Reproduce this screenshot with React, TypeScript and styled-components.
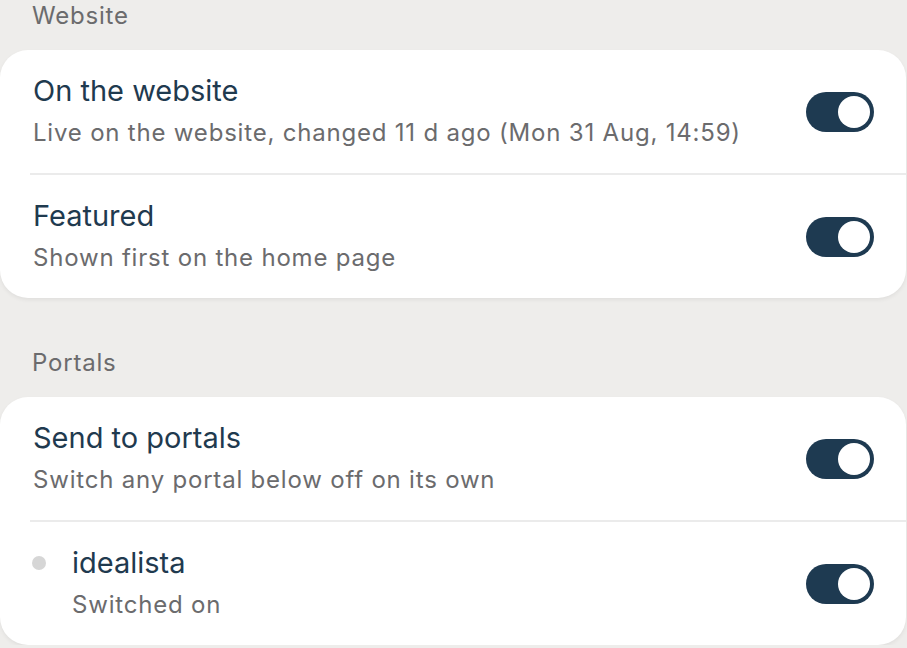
import styled, { createGlobalStyle } from "styled-components";
import { useState } from "react";

type Item = {
  id: string;
  title: string;
  detail: string;
  on: boolean;
  child?: boolean;
};

const sections: { label: string; items: Item[] }[] = [
  {
    label: "Website",
    items: [
      {
        id: "web",
        title: "On the website",
        detail: "Live on the website, changed 11 d ago (Mon 31 Aug, 14:59)",
        on: true,
      },
      {
        id: "featured",
        title: "Featured",
        detail: "Shown first on the home page",
        on: true,
      },
    ],
  },
  {
    label: "Portals",
    items: [
      {
        id: "portals",
        title: "Send to portals",
        detail: "Switch any portal below off on its own",
        on: true,
      },
      {
        id: "idealista",
        title: "idealista",
        detail: "Switched on",
        on: true,
        child: true,
      },
    ],
  },
];

export default function App() {
  const [state, setState] = useState<Record<string, boolean>>(() =>
    Object.fromEntries(
      sections.flatMap((s) => s.items.map((i) => [i.id, i.on]))
    )
  );

  function flip(id: string) {
    setState((prev) => ({ ...prev, [id]: !prev[id] }));
  }

  return (
    <Page>
      <GlobalStyle />
      {sections.map((section) => (
        <Section key={section.label}>
          <SectionLabel>{section.label}</SectionLabel>
          <Card>
            {section.items.map((item) => (
              <Row key={item.id}>
                {item.child && <Dot />}
                <Text>
                  <Title>{item.title}</Title>
                  <Detail>{item.detail}</Detail>
                </Text>
                <Toggle
                  $on={state[item.id]}
                  onClick={() => flip(item.id)}
                  aria-pressed={state[item.id]}
                >
                  <Knob />
                </Toggle>
              </Row>
            ))}
          </Card>
        </Section>
      ))}
    </Page>
  );
}

const GlobalStyle = createGlobalStyle`
  body {
    margin: 0;
    background-color: #eeedeb;
    font-family: Inter, "Noto Sans", sans-serif;
  }
`;

const Page = styled.main`
  display: flex;
  flex-direction: column;
  gap: 50px;

  padding-top: 1px;
  padding-right: 1px;
`;

const Section = styled.section`
  display: flex;
  flex-direction: column;
`;

const SectionLabel = styled.h2`
  margin: 0 0 19px 32px;

  font-size: 24px;
  font-weight: 400;
  line-height: 30px;
  letter-spacing: 0.8px;
  color: #6b6b6d;
`;

const Card = styled.div`
  border-radius: 28px;

  background-color: #ffffff;
  box-shadow: 0 2px 4px rgba(0, 0, 0, 0.06);
`;

const Row = styled.div`
  display: flex;
  align-items: center;

  padding: 25px 32px 25px 33px;

  & + & {
    border-top: 2px solid #ebebeb;
    margin-left: 30px;
    padding-left: 3px;
  }
`;

const Dot = styled.span`
  flex: none;
  width: 14px;
  height: 14px;
  align-self: flex-start;

  margin: 9px 26px 0 -1px;

  border-radius: 50%;
  background-color: #d6d6d6;
`;

const Text = styled.div`
  flex: 1;
  display: flex;
  flex-direction: column;
  gap: 11px;
`;

const Title = styled.span`
  font-size: 29px;
  line-height: 32px;
  color: #1f3a4f;
`;

const Detail = styled.span`
  font-size: 24px;
  line-height: 30px;
  letter-spacing: 0.8px;
  color: #6b6b6d;
`;

const Toggle = styled.button<{ $on: boolean }>`
  flex: none;
  width: 68px;
  height: 40px;

  display: flex;
  align-items: center;
  justify-content: ${(props) => (props.$on ? "flex-end" : "flex-start")};

  padding: 4px;
  border: none;
  border-radius: 20px;

  background-color: ${(props) => (props.$on ? "#1e3a51" : "#d9d9d9")};
  cursor: pointer;
`;

const Knob = styled.span`
  width: 32px;
  height: 32px;

  border-radius: 50%;
  background-color: #ffffff;
`;
